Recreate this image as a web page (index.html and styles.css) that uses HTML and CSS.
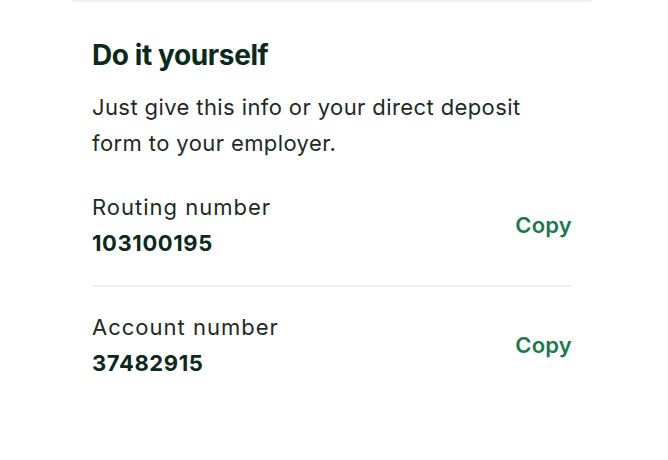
FILE: index.html
```html
<!DOCTYPE html>
<html>
<head>
  <title>Direct deposit</title>
  <link rel="stylesheet" href="styles.css">
</head>
<body>
  <div class="card card-prev"></div>

  <div class="card">
    <h2>Do it yourself</h2>
    <p class="intro">Just give this info or your direct deposit form to your employer.</p>

    <div class="row">
      <div class="info">
        <div class="label">Routing number</div>
        <div class="value">103100195</div>
      </div>
      <button class="copy">Copy</button>
    </div>

    <div class="row">
      <div class="info">
        <div class="label">Account number</div>
        <div class="value">37482915</div>
      </div>
      <button class="copy">Copy</button>
    </div>
  </div>
</body>
</html>
```

FILE: styles.css
```css
body {
  margin: 0;
  background: #fff;
  font-family: Inter, "Noto Sans", sans-serif;
  color: #1d2a23;
}
.card {
  width: 480px;
  margin-left: 72px;
  padding: 0 20px;
  background: #fff;
}
.card-prev {
  height: 0;
  border-bottom: 2px solid #f1f2f1;
  border-radius: 0 0 8px 8px;
}
.card h2 {
  margin: 37px 0 0;
  font-size: 28px;
  line-height: 32px;
  font-weight: 700;
  letter-spacing: -0.4px;
  color: #0c2a1c;
}
.intro {
  margin: 18px 0 4px;
  font-size: 22px;
  line-height: 36px;
  letter-spacing: 0.4px;
  width: 460px;
}
.row {
  display: flex;
  align-items: center;
  justify-content: space-between;
  padding: 24px 0;
}
.row + .row {
  border-top: 2px solid #f0f1f0;
  padding-top: 22px;
}
.label {
  font-size: 22px;
  line-height: 36px;
  letter-spacing: 1px;
}
.value {
  font-size: 22px;
  line-height: 36px;
  font-weight: 700;
  letter-spacing: 0.6px;
  color: #0c2a1c;
}
.copy {
  border: none;
  background: none;
  padding: 0;
  font-family: inherit;
  font-size: 22px;
  font-weight: 600;
  letter-spacing: 0.2px;
  color: #1a7a4b;
  cursor: pointer;
}
```
